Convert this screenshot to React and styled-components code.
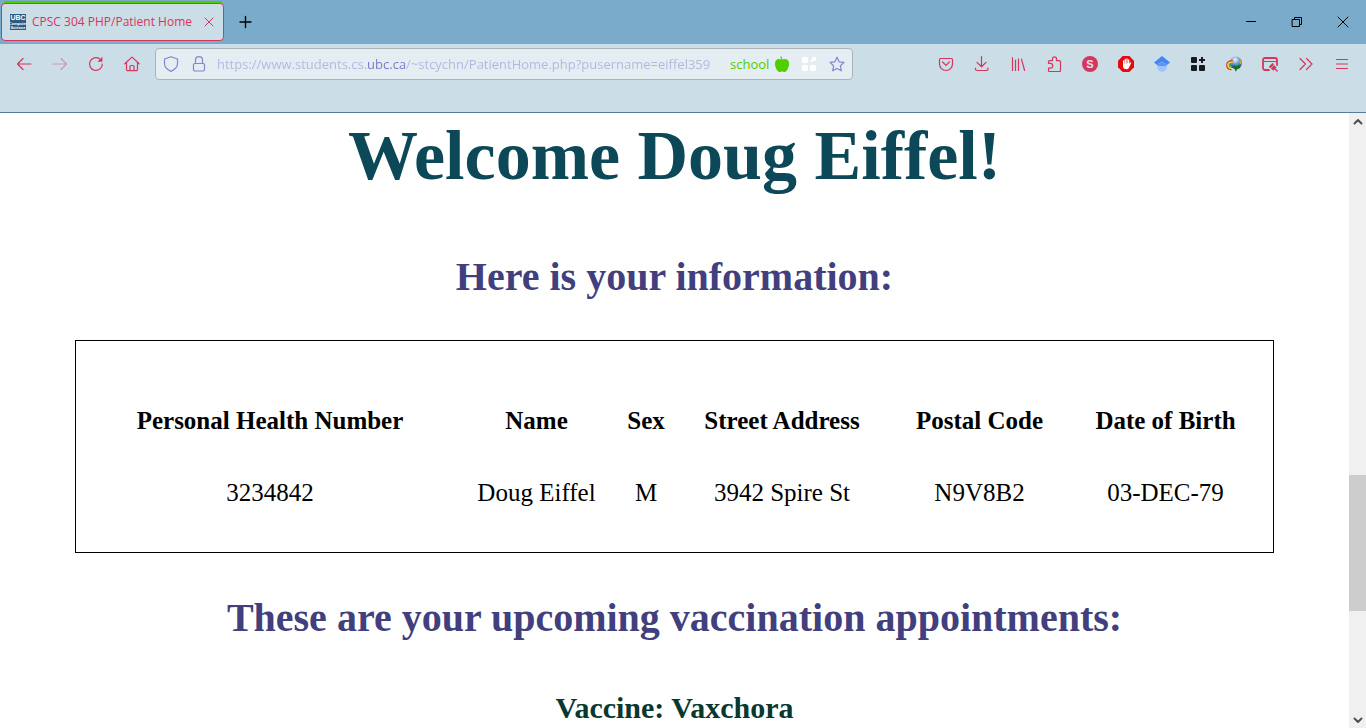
import React from "react";
import styled, { createGlobalStyle } from "styled-components";

const accent = "#d7365c";
const violet = "#8585d0";
const serif = `"Liberation Serif", "Times New Roman", serif`;
const sans = `"Open Sans", "Segoe UI", sans-serif`;

const GlobalStyle = createGlobalStyle`
  * { box-sizing: border-box; }
  body { margin: 0; background: #fff; }
`;

const Browser = styled.div`
  display: flex;
  flex-direction: column;
  height: 100vh;
  overflow: hidden;
  font-family: ${sans};
`;

const TabBar = styled.header`
  display: flex;
  flex: none;
  height: 44px;
  background: #7aabcb;
  border-bottom: 1px solid #9a9fb0;
`;

const Tab = styled.div`
  display: flex;
  flex-direction: column;
  width: 224px;
  padding: 1px 0 2px 1px;
`;

const ContainerLine = styled.div`
  height: 2px;
  margin: 0 2px 0 3px;
  background: #51cd00;
`;

const TabFace = styled.div`
  display: flex;
  flex: 1;
  align-items: center;
  padding: 0 4px 0 8px;
  gap: 6px;
  border: 1px solid ${accent};
  border-radius: 4px;
  background: #cbdde7;
  color: ${accent};
  font-size: 12px;
  line-height: 16px;
`;

const TabTitle = styled.span`
  flex: 1;
  white-space: nowrap;
`;

const Favicon = styled.svg`
  width: 16px;
  height: 16px;
  flex: none;
`;

const IconButton = styled.button`
  display: flex;
  flex: none;
  align-items: center;
  justify-content: center;
  width: ${(p) => p.$width || 36}px;
  height: ${(p) => p.$height || 32}px;
  padding: 0;
  border: 0;
  background: transparent;
  color: ${(p) => p.$color || accent};
  opacity: ${(p) => (p.disabled ? 0.4 : 1)};
`;

const Icon = styled.svg`
  display: block;
  width: 16px;
  height: 16px;
  fill: none;
  stroke: currentColor;
  stroke-width: ${(p) => p.$weight || 1.2};
  stroke-linecap: round;
  stroke-linejoin: round;
`;

const WindowButtons = styled.div`
  display: flex;
  margin-left: auto;
`;

const Toolbar = styled.nav`
  display: flex;
  flex: none;
  align-items: flex-start;
  height: 69px;
  padding: 4px 6px 0;
  background: #cbdde7;
  border-bottom: 1px solid #557c98;
`;

const AddressBar = styled.form`
  display: flex;
  flex: 698;
  align-items: center;
  min-width: 0;
  height: 32px;
  margin-left: 5px;
  padding: 0 1px;
  border: 1px solid #a9b3b8;
  border-radius: 4px;
  background: #e4edf2;
`;

const Address = styled.input`
  flex: 1;
  min-width: 0;
  height: 24px;
  margin-left: 4px;
  padding: 0;
  border: 0;
  outline: 0;
  font-family: ${sans};
  font-size: 13px;
  color: transparent;
  caret-color: ${violet};
  background: linear-gradient(90deg, #b3b6df 149px, #7477c8 149px, #7477c8 188px, #b3b6df 188px);
  background-clip: text;
  -webkit-background-clip: text;
`;

const ContainerLabel = styled.span`
  color: #51cd00;
  font-size: 13px;
  line-height: 18px;
`;

const Spring = styled.div`
  flex: 75;
`;

const Viewport = styled.div`
  display: flex;
  flex: 1;
  min-height: 0;
`;

const Page = styled.main`
  flex: 1;
  min-width: 0;
  overflow: hidden;
  font-family: ${serif};
  text-align: center;
`;

const Title = styled.h1`
  margin: 3px 0 0;
  color: #0c4858;
  font-size: 70px;
  line-height: 80px;
`;

const SectionTitle = styled.h2`
  margin: ${(p) => p.$top}px 0 0;
  color: #413f7d;
  font-size: 40px;
  line-height: 46px;
`;

const VaccineTitle = styled.h3`
  margin: 50px 0 40px;
  color: #08382f;
  font-size: 30px;
  line-height: 34px;
`;

const InfoBox = styled.section`
  margin: 40px 75px 0;
  padding: 44px 20px 23px 0;
  border: 1px solid #000;
`;

const InfoTable = styled.table`
  width: 100%;
  table-layout: fixed;
  border-collapse: collapse;
  color: #000;
  font-size: 25px;
  line-height: 28px;

  th, td {
    padding: 22px 0;
    text-align: center;
    white-space: nowrap;
  }
`;

const Col = styled.col`
  width: ${(p) => p.$width}px;
`;

const Scrollbar = styled.div`
  display: flex;
  flex: none;
  flex-direction: column;
  width: 17px;
  background: #f0f0f0;
`;

const Track = styled.div`
  flex: ${(p) => p.$share};
`;

const Thumb = styled.div`
  flex: 136;
  background: #cdcdcd;
`;

const Brand = styled.text`
  font: 700 ${(p) => p.$size}px "Liberation Sans", sans-serif;
  fill: ${(p) => p.$fill || "#fff"};
  stroke: none;
`;

function Glyph({ children, weight }) {
  return (
    <Icon viewBox="0 0 16 16" $weight={weight} aria-hidden="true">
      {children}
    </Icon>
  );
}

const leftTools = [
  { label: "Back", icon: <path d="M15 8H1.5M7 2.5 1.5 8 7 13.5" /> },
  { label: "Forward", disabled: true, icon: <path d="M1 8h13.5M9 2.5 14.5 8 9 13.5" /> },
  {
    label: "Reload",
    icon: (
      <>
        <path d="M14.3 8.2A6.4 6.4 0 1 1 11.6 2.8" />
        <path d="M14.4.8v5H9.4z" fill="currentColor" stroke="none" />
      </>
    ),
  },
  {
    label: "Home",
    icon: <path d="M.8 7.8 8 1.1l7.200 6.700M2.500 6.500v7a1.200 1.200 0 0 0 1.200 1.200h8.600a1.200 1.200 0 0 0 1.200-1.200v-7M6 14.500v-4a1 1 0 0 1 1-1h2a1 1 0 0 1 1 1v4" />,
  },
];

const rightTools = [
  {
    label: "Save to Pocket",
    icon: <path d="M1.5 3.7a1.2 1.2 0 0 1 1.2-1.2h10.6a1.2 1.2 0 0 1 1.2 1.2V8a6.5 6.5 0 0 1-13 0zM4.6 6 8 9.4 11.4 6" />,
  },
  { label: "Downloads", icon: <path d="M7.5.6v10.2M3 6.4l4.5 4.4L12 6.4M1.5 12v1a1.5 1.5 0 0 0 1.5 1.5h9.5A1.5 1.5 0 0 0 14 13v-1" /> },
  { label: "Library", icon: <path d="M2.5 1.5v13M5.5 4v10.5M8.5 3v11.5M11.5 3.2l3.1 11.3" /> },
  {
    label: "Extensions",
    icon: <path d="M2.5 7.3V5.7a1 1 0 0 1 1-1h3V2.8a2 2 0 0 1 4 0v1.9h3a1 1 0 0 1 1 1v8.8a1 1 0 0 1-1 1h-10a1 1 0 0 1-1-1v-2.3h1.8a2.3 2.3 0 0 0 0-4.9z" />,
  },
  {
    label: "Account",
    icon: (
      <>
        <circle cx="8" cy="8" r="8" fill={accent} stroke="none" />
        <Brand x="8" y="12" textAnchor="middle" $size={11} $fill="#dfe6ee">S</Brand>
      </>
    ),
  },
  {
    label: "Ad blocker",
    icon: (
      <>
        <path d="M4.7 0h6.6L16 4.7v6.6L11.3 16H4.7L0 11.3V4.7z" fill="#e60b0b" stroke="none" />
        <path d="M5.7 5v4M7.3 3.3V8M9 2.9V8M10.7 4v5" stroke="#fff" strokeWidth="1.3" />
        <path d="M5 7.5h6.3l1.2-1.1c.6-.3 1 .2.6.8l-2.3 4.7a2.5 2.5 0 0 1-2.1 1.4c-2.4 0-3.7-1.3-3.7-3.3z" fill="#fff" stroke="none" />
      </>
    ),
  },
  {
    label: "Scholar",
    icon: (
      <g stroke="none">
        <path d="M8 0 0 6.4l3.4 2.9h9.2L16 6.4z" fill="#4285f4" />
        <circle cx="8" cy="11" r="4.8" fill="#a0c3ff" />
        <path d="M3.6 9.2a5 5 0 0 1 8.8 0L11.500 10h-7z" fill="#5b93f6" />
      </g>
    ),
  },
  {
    label: "Add widget",
    icon: (
      <g fill="#1a1a1e" stroke="none">
        <rect x="1" y="1" width="6" height="6" rx="1" />
        <rect x="1" y="9" width="6" height="6" rx="1" />
        <rect x="9" y="9" width="6" height="6" rx="1" />
        <path d="M11 1h2v2h2v2h-2v2h-2V5H9V3h2z" />
      </g>
    ),
  },
  {
    label: "Download manager",
    icon: (
      <>
        <defs>
          <radialGradient id="globe" cx="45%" cy="25%" r="80%">
            <stop offset="0" stopColor="#f2f6ff" />
            <stop offset=".45" stopColor="#6c97dc" />
            <stop offset="1" stopColor="#16376e" />
          </radialGradient>
        </defs>
        <circle cx="9.800" cy="6.800" r="6.200" fill="url(#globe)" stroke="none" />
        <path d="M12.500 1.500c2.300 1 3.500 3 3.500 5.500l-1.500 1.500-1.500-2 .8-2z" fill="#b9a93a" stroke="none" />
        <path d="M6.500 5C3 4.300.8 6.300.7 9c0 2 1.500 4.300 4.300 4.600" stroke="#e2342b" strokeWidth="1.300" />
        <path d="M6.500 6.200C3.800 5.800 2 7.200 2 9.100c0 1.600 1 3 3.200 3.300" stroke="#f5df22" strokeWidth="1.300" />
        <path d="M6.500 7.400c-2.200-.2-3.300.7-3.300 1.900 0 1 .7 1.800 2.200 1.900" stroke="#37b84a" strokeWidth="1.200" />
        <path d="m6 9 4.500 1 5-1-2 1.800 1 1.200-3 1-1.800 2.800-1.200-3.300z" fill="#087a12" stroke="none" />
      </>
    ),
  },
  {
    label: "Page tools",
    icon: (
      <>
        <path d="M7 14H3a2 2 0 0 1-2-2V4a2 2 0 0 1 2-2h10a2 2 0 0 1 2 2v5" strokeWidth="1.800" />
        <path d="M1.500 5.500h13" />
        <path d="m10.300 7.300 4.200 4.200-3.200 3.200-4.200-4.200z" fill="currentColor" stroke="none" />
        <path d="m13 13 2.200 2M8 11l3-3" strokeWidth="1.500" />
        <path d="m9 12 3-3" stroke="#cbdde7" strokeWidth=".6" />
      </>
    ),
  },
  { label: "More tools", icon: <path d="M2 2.500 7.500 8 2 13.500M8.500 2.500 14 8l-5.500 5.500" /> },
  { label: "Menu", icon: <path d="M2.500 3.500h11M2.500 8h11M2.500 12.500h11" /> },
];

const columns = [
  { name: "Personal Health Number", value: "3234842", width: 388 },
  { name: "Name", value: "Doug Eiffel", width: 145 },
  { name: "Sex", value: "M", width: 74 },
  { name: "Street Address", value: "3942 Spire St", width: 198 },
  { name: "Postal Code", value: "N9V8B2", width: 197 },
  { name: "Date of Birth", value: "03-DEC-79", width: 175 },
];

function Tabs() {
  return (
    <TabBar>
      <Tab>
        <ContainerLine />
        <TabFace>
          <Favicon viewBox="0 0 16 16" aria-hidden="true">
            <rect width="16" height="16" fill="#2b5b80" />
            <Brand x="8" y="6" textAnchor="middle" $size={7}>UBC</Brand>
            <Brand x="8" y="11" textAnchor="middle" $size={4}>Computer</Brand>
            <Brand x="8" y="15" textAnchor="middle" $size={4}>Science</Brand>
          </Favicon>
          <TabTitle>CPSC 304 PHP/Patient Home</TabTitle>
          <IconButton type="button" aria-label="Close tab" $width={20} $height={24}>
            <Glyph weight={1}><path d="m4 4 8 8m0-8-8 8" /></Glyph>
          </IconButton>
        </TabFace>
      </Tab>
      <IconButton type="button" aria-label="New tab" $width={44} $height={43} $color="#000">
        <Glyph weight={1.4}><path d="M7.500 2.500v11M2 8h11" /></Glyph>
      </IconButton>
      <WindowButtons>
        <IconButton type="button" aria-label="Minimize" $width={46} $height={43} $color="#000">
          <Glyph weight={1}><path d="M3.500 7.500h9" /></Glyph>
        </IconButton>
        <IconButton type="button" aria-label="Restore" $width={46} $height={43} $color="#000">
          <Glyph weight={1}><path d="M3.500 5.500h7v7h-7zM5.500 5.500v-2h7v7h-2" /></Glyph>
        </IconButton>
        <IconButton type="button" aria-label="Close" $width={46} $height={43} $color="#000">
          <Glyph weight={1}><path d="m3 3 10 10m0-10L3 13" /></Glyph>
        </IconButton>
      </WindowButtons>
    </TabBar>
  );
}

function Navigation() {
  return (
    <Toolbar>
      {leftTools.map((t) => (
        <IconButton key={t.label} type="button" aria-label={t.label} disabled={t.disabled}>
          <Glyph>{t.icon}</Glyph>
        </IconButton>
      ))}
      <AddressBar>
        <IconButton type="button" aria-label="Tracking protection" $width={28} $height={28} $color={violet}>
          <Glyph><path d="M8 .7 14.500 3v4.500c0 3.300-2.300 6-6.500 7.900-4.200-1.900-6.500-4.600-6.500-7.900V3z" /></Glyph>
        </IconButton>
        <IconButton type="button" aria-label="Site security" $width={28} $height={28} $color={violet}>
          <Glyph>
            <path d="M4.500 7.500v-3.400a3.500 3.500 0 0 1 7 0v3.400" />
            <rect x="2.500" y="7.500" width="11" height="7.500" rx="1.200" />
          </Glyph>
        </IconButton>
        <Address
          aria-label="Address"
          spellCheck={false}
          defaultValue="https://www.students.cs.ubc.ca/~stcychn/PatientHome.php?pusername=eiffel359"
        />
        <ContainerLabel>school</ContainerLabel>
        <IconButton as="span" $width={26} $height={28} $color="#51cd00">
          <Glyph>
            <path
              d="M8.500 3.600C9.600 3 11 2.700 12.400 3.300 14.500 4.200 15.200 6.200 15 8.500c-.3 3-1.800 6.300-3.600 7.200-1.100.5-2.200-.1-3.400-.1s-2.300.6-3.400.1C2.800 14.800 1.300 11.500 1 8.500.8 6.200 1.500 4.200 3.600 3.300 5 2.700 6.400 3 7.500 3.600L6.200.8 7.300.3z"
              fill="currentColor"
              stroke="none"
            />
          </Glyph>
        </IconButton>
        <IconButton type="button" aria-label="Open in apps" $width={28} $height={28} $color="#fff">
          <Glyph>
            <g fill="currentColor" stroke="none">
              <rect x="1" y="1" width="6" height="6" rx="1" />
              <rect x="1" y="9" width="6" height="6" rx="1" />
              <rect x="9" y="9" width="6" height="6" rx="1" />
              <path d="M10.500 1H15v4.500l-1.500-1.500L11 6.500 9.500 5 12 2.500z" />
            </g>
          </Glyph>
        </IconButton>
        <IconButton type="button" aria-label="Bookmark" $width={28} $height={28} $color={violet}>
          <Glyph><path d="m8 1.200 2.100 4.600 4.900.6-3.600 3.400.9 5L8 12.400l-4.300 2.400.9-5L1 6.400l4.900-.6z" /></Glyph>
        </IconButton>
      </AddressBar>
      <Spring />
      {rightTools.map((t) => (
        <IconButton key={t.label} type="button" aria-label={t.label}>
          <Glyph>{t.icon}</Glyph>
        </IconButton>
      ))}
    </Toolbar>
  );
}

export default function App() {
  return (
    <Browser>
      <GlobalStyle />
      <Tabs />
      <Navigation />
      <Viewport>
        <Page>
          <Title>Welcome Doug Eiffel!</Title>
          <SectionTitle $top={58}>Here is your information:</SectionTitle>
          <InfoBox>
            <InfoTable>
              <colgroup>
                {columns.map((c) => <Col key={c.name} $width={c.width} />)}
              </colgroup>
              <thead>
                <tr>{columns.map((c) => <th key={c.name} scope="col">{c.name}</th>)}</tr>
              </thead>
              <tbody>
                <tr>{columns.map((c) => <td key={c.name}>{c.value}</td>)}</tr>
              </tbody>
            </InfoTable>
          </InfoBox>
          <SectionTitle $top={42}>These are your upcoming vaccination appointments:</SectionTitle>
          <VaccineTitle>Vaccine: Vaxchora</VaccineTitle>
        </Page>
        <Scrollbar>
          <IconButton type="button" aria-label="Scroll up" $width={17} $height={17} $color="#505050">
            <Glyph weight={2}><path d="M4.500 9.500 8 6l3.500 3.500" /></Glyph>
          </IconButton>
          <Track $share={345} />
          <Thumb />
          <Track $share={100} />
          <IconButton type="button" aria-label="Scroll down" $width={17} $height={17} $color="#505050">
            <Glyph weight={2}><path d="M4.500 6.500 8 10l3.500-3.500" /></Glyph>
          </IconButton>
        </Scrollbar>
      </Viewport>
    </Browser>
  );
}
